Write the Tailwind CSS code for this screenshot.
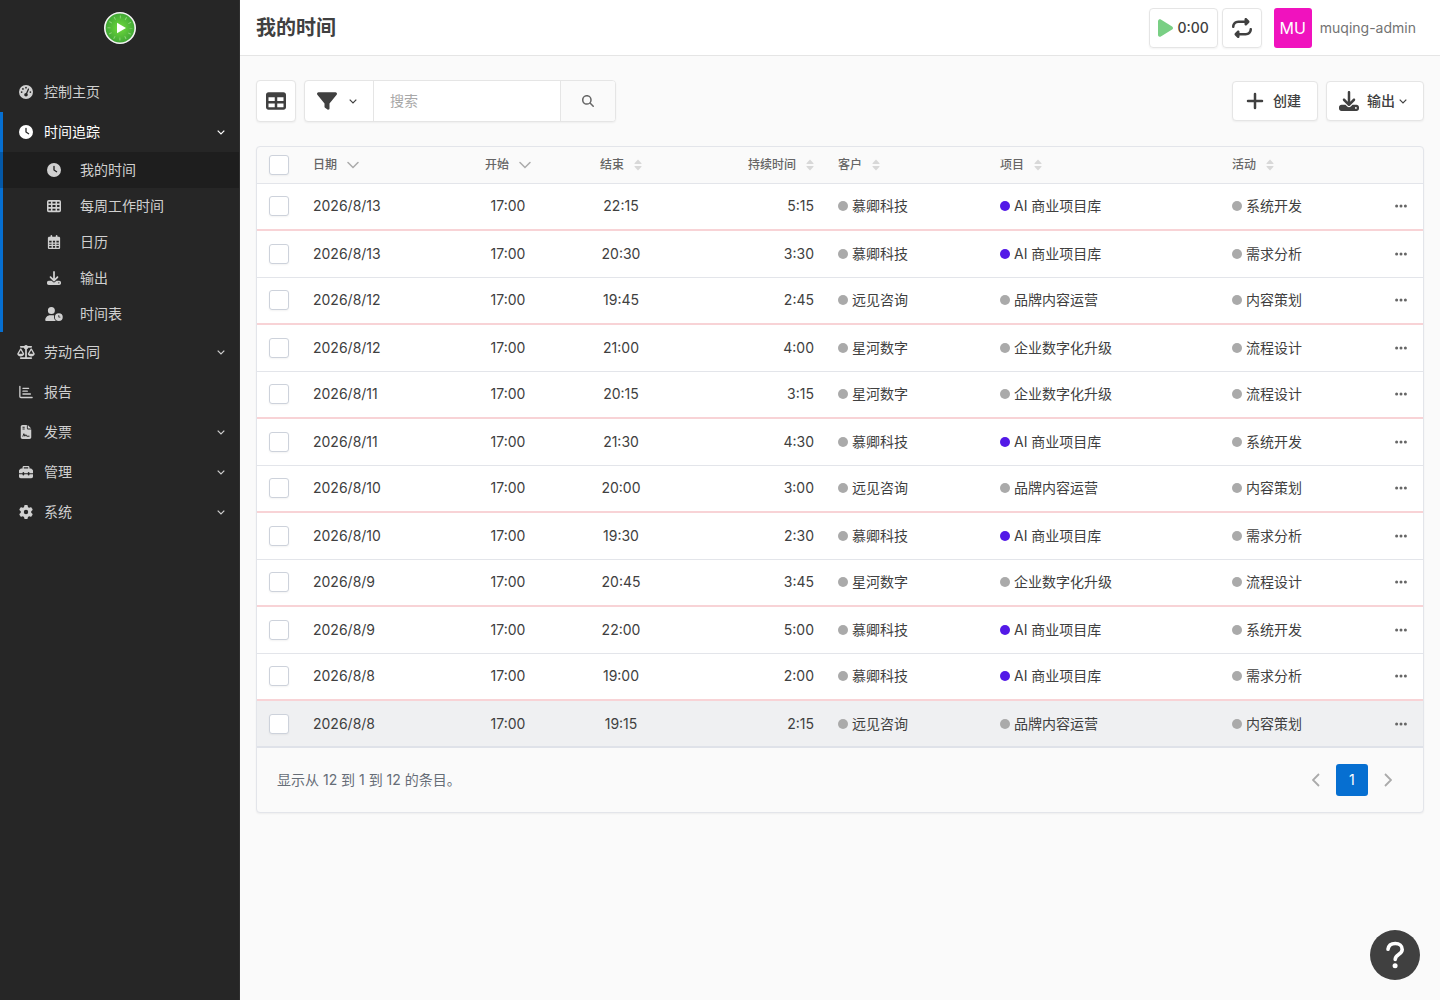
<!DOCTYPE html>
<html lang="zh-CN">
<head>
<meta charset="utf-8">
<meta name="viewport" content="width=device-width, initial-scale=1">
<title>我的时间</title>
<script src="https://cdn.jsdelivr.net/npm/@tailwindcss/browser@4"></script>
</head>
<body class="flex min-h-screen bg-[#fafafa] font-['Inter','Noto_Sans_CJK_SC',sans-serif] text-sm text-[#404040]">

<svg class="hidden" aria-hidden="true">
  <symbol id="clock" viewBox="0 0 512 512"><path d="M256 0a256 256 0 1 1 0 512A256 256 0 1 1 256 0zM232 120V256c0 8 4 15.500 10.700 20l96 64c11 7.400 25.900 4.400 33.300-6.700s4.400-25.900-6.700-33.300L280 243.200V120c0-13.300-10.700-24-24-24s-24 10.700-24 24z"/></symbol>
  <symbol id="gauge" viewBox="0 0 512 512"><path d="M0 256a256 256 0 1 1 512 0A256 256 0 1 1 0 256zM288 96a32 32 0 1 0 -64 0 32 32 0 1 0 64 0zM256 416c35.300 0 64-28.700 64-64c0-17.400-6.900-33.100-18.100-44.600L366 161.700c5.300-12.100-.2-26.300-12.300-31.600s-26.300 .2-31.600 12.300L257.900 288c-.6 0-1.300 0-1.900 0c-35.300 0-64 28.700-64 64s28.700 64 64 64zM176 144a32 32 0 1 0 -64 0 32 32 0 1 0 64 0zM96 288a32 32 0 1 0 0-64 32 32 0 1 0 0 64zm352-32a32 32 0 1 0 -64 0 32 32 0 1 0 64 0z"/></symbol>
  <symbol id="grid" viewBox="0 0 512 512"><path fill-rule="evenodd" d="M64 32H448a64 64 0 0 1 64 64V416a64 64 0 0 1-64 64H64a64 64 0 0 1-64-64V96A64 64 0 0 1 64 32zM56 96v64h88V96zM200 96v64h112V96zM368 96v64h88V96zM56 216v80h88v-80zM200 216v80h112v-80zM368 216v80h88v-80zM56 352v64h88v-64zM200 352v64h112v-64zM368 352v64h88v-64z"/></symbol>
  <symbol id="calendar" viewBox="0 0 448 512"><path fill-rule="evenodd" d="M128 0c17.700 0 32 14.300 32 32V64H288V32c0-17.700 14.300-32 32-32s32 14.300 32 32V64h48c26.500 0 48 21.500 48 48v48H0V112C0 85.500 21.500 64 48 64H96V32c0-17.700 14.300-32 32-32zM0 160H448V464c0 26.500-21.500 48-48 48H48c-26.500 0-48-21.500-48-48V160zM48 208v64h88v-64zM184 208v64h80v-64zM312 208v64h88v-64zM48 316v44h88v-44zM184 316v44h80v-44zM312 316v44h88v-44zM48 404v60h88v-60zM184 404v60h80v-60zM312 404v60h88v-60z"/></symbol>
  <symbol id="download" viewBox="0 0 512 512"><path d="M288 32c0-17.700-14.300-32-32-32s-32 14.300-32 32V274.700l-73.400-73.400c-12.500-12.500-32.800-12.500-45.300 0s-12.500 32.800 0 45.300l128 128c12.500 12.500 32.800 12.500 45.300 0l128-128c12.500-12.500 12.500-32.800 0-45.300s-32.800-12.500-45.300 0L288 274.700V32zM64 352c-35.300 0-64 28.700-64 64v32c0 35.300 28.700 64 64 64H448c35.300 0 64-28.700 64-64V416c0-35.300-28.700-64-64-64H346.500l-45.300 45.300c-25 25-65.500 25-90.500 0L165.500 352H64zm368 56a24 24 0 1 1 0 48 24 24 0 1 1 0-48z"/></symbol>
  <symbol id="user-clock" viewBox="0 0 640 512"><path d="M224 0a128 128 0 1 1 0 256A128 128 0 1 1 224 0zM178.300 304h91.400c20.600 0 40.400 3.500 58.800 9.900C323 331 320 349.100 320 368c0 59.500 29.500 112.100 74.800 144H29.700C13.300 512 0 498.700 0 482.300C0 383.800 79.800 304 178.300 304zM352 368a144 144 0 1 1 288 0 144 144 0 1 1 -288 0zm144-80c-8.800 0-16 7.200-16 16v64c0 8.800 7.200 16 16 16h48c8.800 0 16-7.200 16-16s-7.200-16-16-16H512V304c0-8.800-7.200-16-16-16z"/></symbol>
  <symbol id="scale" viewBox="0 0 640 512"><path fill-rule="evenodd" d="M384 32H512c17.700 0 32 14.300 32 32s-14.300 32-32 32H398c-5 25-22 46-46 56V448H512c17.700 0 32 14.300 32 32s-14.300 32-32 32H128c-17.700 0-32-14.300-32-32s14.300-32 32-32H288V152c-24-10-41-31-46-56H128c-17.700 0-32-14.300-32-32s14.300-32 32-32H256c15-19 38-32 64-32s49 13 64 32zM439 320H585L512 195zM512 416c-63 0-115-34-126-79-3-11 1-22 7-32l96-165c5-9 14-14 23-14s18 5 23 14l96 165c6 10 10 21 7 32-11 45-63 79-126 79zM127 195L54 320H200zM1 337c-3-11 1-22 7-32l96-165c5-9 14-14 23-14s18 5 23 14l96 165c6 10 10 21 7 32-11 45-63 79-126 79S12 382 1 337z"/></symbol>
  <symbol id="chart" viewBox="0 0 16 16"><path fill="none" stroke="currentColor" stroke-width="1.500" stroke-linecap="round" stroke-linejoin="round" d="M1 1.500v11.500a1.300 1.300 0 0 0 1.300 1.300H15M4.500 3.800h6.500M4.500 7h5M4.500 10.300h8.500"/></symbol>
  <symbol id="invoice" viewBox="0 0 384 512"><path fill-rule="evenodd" d="M64 0C28.700 0 0 28.700 0 64V448c0 35.300 28.700 64 64 64H320c35.300 0 64-28.700 64-64V160H256c-17.700 0-32-14.300-32-32V0zM256 0V128H384zM64 64h80v34H64zM64 128h80v34H64z"/><path d="M80 410l34-92 36 92 36-56 32 56h86" fill="none" stroke="#262626" stroke-width="36" stroke-linecap="round" stroke-linejoin="round"/></symbol>
  <symbol id="toolbox" viewBox="0 0 512 512"><path fill-rule="evenodd" d="M176 32H336c26.500 0 48 21.500 48 48v48h44c13 0 25 5 34 14l36 36c9 9 14 21 14 34v92H384v-16c0-17.700-14.300-32-32-32s-32 14.300-32 32v16H192v-16c0-17.700-14.300-32-32-32s-32 14.300-32 32v16H0v-92c0-13 5-25 14-34l36-36c9-9 21-14 34-14h44V80c0-26.500 21.500-48 48-48zM176 80v48H336V80zM0 336H128v16c0 17.700 14.300 32 32 32s32-14.300 32-32v-16H320v16c0 17.700 14.300 32 32 32s32-14.300 32-32v-16H512v80c0 35.300-28.700 64-64 64H64c-35.300 0-64-28.700-64-64z"/></symbol>
  <symbol id="gear" viewBox="0 0 512 512"><path d="M495.900 166.600c3.200 8.700 .5 18.400-6.400 24.600l-43.300 39.400c1.100 8.300 1.700 16.800 1.700 25.400s-.6 17.100-1.700 25.400l43.300 39.400c6.900 6.200 9.600 15.900 6.400 24.600c-4.400 11.900-9.700 23.300-15.800 34.300l-4.700 8.100c-6.600 11-14 21.400-22.100 31.200c-5.900 7.200-15.700 9.600-24.500 6.800l-55.700-17.700c-13.400 10.300-28.200 18.900-44 25.400l-12.500 57.100c-2 9.100-9 16.300-18.200 17.800c-13.800 2.300-28 3.500-42.500 3.500s-28.700-1.200-42.500-3.500c-9.200-1.500-16.200-8.700-18.200-17.800l-12.500-57.100c-15.800-6.500-30.600-15.100-44-25.400L83.100 425.900c-8.800 2.800-18.600 .3-24.500-6.800c-8.100-9.800-15.500-20.200-22.100-31.200l-4.700-8.100c-6.100-11-11.400-22.400-15.800-34.300c-3.200-8.700-.5-18.400 6.400-24.600l43.300-39.400C64.600 273.100 64 264.600 64 256s.6-17.100 1.700-25.400L22.400 191.200c-6.900-6.200-9.600-15.900-6.400-24.600c4.400-11.900 9.700-23.300 15.800-34.300l4.700-8.100c6.600-11 14-21.400 22.100-31.200c5.900-7.200 15.700-9.600 24.500-6.800l55.700 17.700c13.400-10.300 28.200-18.900 44-25.400l12.500-57.100c2-9.100 9-16.300 18.200-17.800C227.300 1.200 241.500 0 256 0s28.700 1.200 42.500 3.500c9.200 1.500 16.200 8.700 18.200 17.800l12.500 57.100c15.800 6.500 30.600 15.100 44 25.400l55.700-17.700c8.800-2.800 18.600-.3 24.500 6.800c8.100 9.800 15.500 20.200 22.100 31.200l4.700 8.100c6.100 11 11.400 22.400 15.800 34.300zM256 336a80 80 0 1 0 0-160 80 80 0 1 0 0 160z"/></symbol>
  <symbol id="table" viewBox="0 0 512 512"><path d="M64 256V160H224v96H64zm0 64H224v96H64V320zm224 96V320H448v96H288zM448 256H288V160H448v96zM64 32C28.700 32 0 60.700 0 96V416c0 35.300 28.700 64 64 64H448c35.300 0 64-28.700 64-64V96c0-35.300-28.700-64-64-64H64z"/></symbol>
  <symbol id="filter" viewBox="0 0 512 512"><path d="M3.900 54.900C10.500 40.900 24.500 32 40 32H472c15.500 0 29.500 8.900 36.100 22.900s4.600 30.500-5.200 42.500L320 320.900V448c0 12.100-6.800 23.200-17.700 28.600s-23.800 4.300-33.500-3l-64-48c-8.100-6-12.800-15.500-12.800-25.600V320.900L9 97.300C-.7 85.400-2.800 68.800 3.900 54.900z"/></symbol>
  <symbol id="search" viewBox="0 0 512 512"><path d="M416 208c0 45.900-14.900 88.300-40 122.700L502.600 457.400c12.500 12.500 12.500 32.800 0 45.300s-32.800 12.500-45.300 0L330.700 376c-34.400 25.200-76.800 40-122.700 40C93.100 416 0 322.900 0 208S93.100 0 208 0S416 93.100 416 208zM208 352a144 144 0 1 0 0-288 144 144 0 1 0 0 288z"/></symbol>
  <symbol id="play" viewBox="0 0 384 512"><path d="M73 39c-14.800-9.100-33.400-9.400-48.500-.9S0 62.600 0 80V432c0 17.400 9.400 33.400 24.500 41.900s33.700 8.100 48.500-.9L361 297c14.300-8.700 23-24.200 23-41s-8.700-32.200-23-41L73 39z"/></symbol>
  <symbol id="repeat" viewBox="0 0 512 512"><path d="M0 224c0 17.700 14.300 32 32 32s32-14.300 32-32c0-53 43-96 96-96H320v32c0 12.900 7.800 24.600 19.800 29.600s25.700 2.200 34.900-6.900l64-64c12.500-12.500 12.500-32.800 0-45.300l-64-64c-9.200-9.200-22.900-11.900-34.900-6.900S320 19.100 320 32V64H160C71.600 64 0 135.600 0 224zm512 64c0-17.700-14.300-32-32-32s-32 14.300-32 32c0 53-43 96-96 96H192V352c0-12.900-7.800-24.600-19.800-29.600s-25.700-2.200-34.900 6.900l-64 64c-12.500 12.500-12.500 32.800 0 45.300l64 64c9.200 9.200 22.900 11.900 34.900 6.900s19.800-16.600 19.800-29.600V448H352c88.400 0 160-71.600 160-160z"/></symbol>
  <symbol id="plus" viewBox="0 0 20 20"><path fill="none" stroke="currentColor" stroke-width="2.500" stroke-linecap="round" d="M10 3v14M3 10h14"/></symbol>
  <symbol id="caret" viewBox="0 0 8 8"><path fill="none" stroke="currentColor" stroke-width="1.200" d="M.7 2.700 4 6 7.300 2.700"/></symbol>
  <symbol id="desc" viewBox="0 0 12 8"><path fill="none" stroke="currentColor" stroke-width="1.500" stroke-linecap="round" d="M1 1.500 6 6.500 11 1.500"/></symbol>
  <symbol id="sort" viewBox="0 0 8 12"><path d="M4 .5 7.500 4.200q.4.800-.5.800H1Q.1 5 .5 4.200zM4 11.500 7.500 7.800q.4-.8-.5-.8H1q-.9 0-.5.800z"/></symbol>
  <symbol id="dots" viewBox="0 0 12 4"><circle cx="1.600" cy="2" r="1.500"/><circle cx="6" cy="2" r="1.500"/><circle cx="10.400" cy="2" r="1.500"/></symbol>
</svg>

<aside class="w-60 shrink-0 border-r border-[#303030] bg-[#262626] text-[#d0d0d0]">
  <a href="#" aria-label="首页" class="flex h-14 items-center justify-center">
    <svg class="size-8" viewBox="0 0 32 32">
      <defs><radialGradient id="face"><stop offset="0" stop-color="#6fdc3c"/><stop offset="1" stop-color="#3fa535"/></radialGradient></defs>
      <circle cx="16" cy="16" r="15.200" fill="url(#face)" stroke="#f4f4f4" stroke-width="1.600"/>
      <circle cx="16" cy="16" r="11" fill="none" stroke="#b5eaa0" stroke-opacity=".6" stroke-width="3" stroke-dasharray="1 4.760" stroke-dashoffset=".5"/>
      <path d="M13 10.700v10.600L22 16z" fill="#fff"/>
    </svg>
  </a>
  <nav class="pt-4">
    <a href="#" class="flex h-10 items-center gap-2 px-4"><svg class="h-3.5 w-5 fill-current"><use href="#gauge"/></svg>控制主页</a>
    <div class="border-l-[3px] border-[#066fd1]">
      <a href="#" class="-ml-[3px] flex h-10 items-center gap-2 pr-3.5 pl-4 text-white"><svg class="h-3.5 w-5 fill-current"><use href="#clock"/></svg><span class="grow">时间追踪</span><svg class="size-2"><use href="#caret"/></svg></a>
      <a href="#" aria-current="page" class="-ml-[3px] flex h-9 items-center gap-4 bg-black/20 pl-11"><svg class="h-3.5 w-5 fill-current"><use href="#clock"/></svg>我的时间</a>
      <a href="#" class="-ml-[3px] flex h-9 items-center gap-4 pl-11"><svg class="h-3.5 w-5 fill-current"><use href="#grid"/></svg>每周工作时间</a>
      <a href="#" class="-ml-[3px] flex h-9 items-center gap-4 pl-11"><svg class="h-3.5 w-5 fill-current"><use href="#calendar"/></svg>日历</a>
      <a href="#" class="-ml-[3px] flex h-9 items-center gap-4 pl-11"><svg class="h-3.5 w-5 fill-current"><use href="#download"/></svg>输出</a>
      <a href="#" class="-ml-[3px] flex h-9 items-center gap-4 pl-11"><svg class="h-3.5 w-5 fill-current"><use href="#user-clock"/></svg>时间表</a>
    </div>
    <a href="#" class="flex h-10 items-center gap-2 pr-3.5 pl-4"><svg class="h-3.5 w-5 fill-current"><use href="#scale"/></svg><span class="grow">劳动合同</span><svg class="size-2"><use href="#caret"/></svg></a>
    <a href="#" class="flex h-10 items-center gap-2 px-4"><svg class="h-3.5 w-5 fill-current"><use href="#chart"/></svg>报告</a>
    <a href="#" class="flex h-10 items-center gap-2 pr-3.5 pl-4"><svg class="h-3.5 w-5 fill-current"><use href="#invoice"/></svg><span class="grow">发票</span><svg class="size-2"><use href="#caret"/></svg></a>
    <a href="#" class="flex h-10 items-center gap-2 pr-3.5 pl-4"><svg class="h-3.5 w-5 fill-current"><use href="#toolbox"/></svg><span class="grow">管理</span><svg class="size-2"><use href="#caret"/></svg></a>
    <a href="#" class="flex h-10 items-center gap-2 pr-3.5 pl-4"><svg class="h-3.5 w-5 fill-current"><use href="#gear"/></svg><span class="grow">系统</span><svg class="size-2"><use href="#caret"/></svg></a>
  </nav>
</aside>

<div class="min-w-0 grow">
  <header class="flex h-14 items-center border-b border-[#e5e5e5] bg-white pr-6 pl-4">
    <h1 class="grow text-xl font-semibold">我的时间</h1>
    <button class="flex h-10 items-center gap-1 rounded border border-[#e5e5e5] px-2 font-medium shadow-xs"><svg class="h-5 w-[15px] fill-[#79cf84]"><use href="#play"/></svg>0:00</button>
    <button aria-label="重新开始" class="ml-1 flex size-10 items-center justify-center rounded border border-[#e5e5e5] shadow-xs"><svg class="size-5 fill-current"><use href="#repeat"/></svg></button>
    <a href="#" class="ml-3 flex items-center gap-2 text-[#737373]"><span class="flex h-10 w-[38px] items-center justify-center rounded-[3px] bg-[#f012be] text-base text-white">MU</span>muqing-admin</a>
  </header>

  <main class="px-4 pt-6">
    <div class="flex items-center">
      <button aria-label="列" class="mr-2 flex h-[42px] w-10 items-center justify-center rounded border border-[#e5e5e5] bg-white shadow-xs"><svg class="size-5 fill-current"><use href="#table"/></svg></button>
      <form class="flex h-[42px] w-[312px] overflow-hidden rounded border border-[#e5e5e5] bg-white shadow-xs">
        <button type="button" aria-label="筛选" class="flex w-[69px] shrink-0 items-center gap-3 border-r border-[#e5e5e5] pl-3"><svg class="size-5 fill-current"><use href="#filter"/></svg><svg class="size-2"><use href="#caret"/></svg></button>
        <input type="search" aria-label="搜索" placeholder="搜索" class="min-w-0 grow px-4 outline-none placeholder:text-[#a8a8a8]">
        <button aria-label="开始搜索" class="flex w-[55px] shrink-0 items-center justify-center border-l border-[#e5e5e5] bg-[#fafafa]"><svg class="size-3 fill-[#666]"><use href="#search"/></svg></button>
      </form>
      <button class="ml-auto flex h-10 items-center gap-2 rounded border border-[#e5e5e5] bg-white px-3 pr-4 font-medium shadow-xs"><svg class="size-5"><use href="#plus"/></svg>创建</button>
      <button class="ml-2 flex h-10 items-center gap-2 rounded border border-[#e5e5e5] bg-white pr-4 pl-3 font-medium shadow-xs"><svg class="size-5 fill-current"><use href="#download"/></svg><span class="flex items-center gap-1">输出<svg class="size-2"><use href="#caret"/></svg></span></button>
    </div>

    <section class="mt-6 overflow-hidden rounded border border-[#e3e5ea] bg-[#fafafa] shadow-xs">
      <table class="w-full table-fixed">
        <colgroup><col class="w-[44px]"><col class="w-[172px]"><col class="w-[70px]"><col class="w-[156px]"><col class="w-[127px]"><col class="w-[162px]"><col class="w-[232px]"><col class="w-[169px]"><col class="w-[34px]"></colgroup>
        <thead>
          <tr class="h-9 border-b border-[#e3e5ea] text-left text-xs whitespace-nowrap text-[#666]">
            <th class="pl-3"><input type="checkbox" aria-label="全选" class="block size-5 appearance-none rounded-[3px] border border-[#cdd2db] bg-white shadow-xs"></th>
            <th class="px-3 font-medium"><span class="flex items-center gap-2.5">日期<svg class="h-2 w-3 text-[#aaa]"><use href="#desc"/></svg></span></th>
            <th class="px-3 font-medium"><span class="flex items-center gap-2.5">开始<svg class="h-2 w-3 text-[#aaa]"><use href="#desc"/></svg></span></th>
            <th class="px-3 font-medium"><span class="flex items-center justify-center gap-2.5">结束<svg class="h-3 w-2 fill-[#d8d8d8]"><use href="#sort"/></svg></span></th>
            <th class="px-3 font-medium"><span class="flex items-center justify-end gap-2.5">持续时间<svg class="h-3 w-2 fill-[#d8d8d8]"><use href="#sort"/></svg></span></th>
            <th class="px-3 font-medium"><span class="flex items-center gap-2.5">客户<svg class="h-3 w-2 fill-[#d8d8d8]"><use href="#sort"/></svg></span></th>
            <th class="px-3 font-medium"><span class="flex items-center gap-2.5">项目<svg class="h-3 w-2 fill-[#d8d8d8]"><use href="#sort"/></svg></span></th>
            <th class="px-3 font-medium"><span class="flex items-center gap-2.5">活动<svg class="h-3 w-2 fill-[#d8d8d8]"><use href="#sort"/></svg></span></th>
            <th></th>
          </tr>
        </thead>
        <tbody id="entries"></tbody>
      </table>
      <footer class="flex h-16 items-center justify-between pr-[19px] pl-5 text-[#666d77]">
        <p>显示从 12 到 1 到 12 的条目。</p>
        <nav aria-label="分页" class="flex items-center">
          <a href="#" aria-label="上一页" class="flex size-8 items-center justify-center text-[#aaa]"><svg class="h-3.5 w-2" viewBox="0 0 8 14"><path d="M7 1 1 7l6 6" fill="none" stroke="currentColor" stroke-width="1.800"/></svg></a>
          <a href="#" aria-current="page" class="mx-1 flex size-8 items-center justify-center rounded-[3px] bg-[#066fd1] text-white">1</a>
          <a href="#" aria-label="下一页" class="flex size-8 items-center justify-center text-[#aaa]"><svg class="h-3.5 w-2" viewBox="0 0 8 14"><path d="m1 1 6 6-6 6" fill="none" stroke="currentColor" stroke-width="1.800"/></svg></a>
        </nav>
      </footer>
    </section>
  </main>
</div>

<button aria-label="帮助" class="fixed right-5 bottom-5 flex size-[50px] items-center justify-center rounded-full bg-[#404040]">
  <svg class="h-7 w-5" viewBox="0 0 20 28"><path d="M3 8.300C3.500 4.500 6.500 2.500 10.300 2.500c4 0 6.900 2.300 6.900 6 0 5.500-7 4.700-7 10" fill="none" stroke="#fff" stroke-width="3.600" stroke-linecap="round"/><circle cx="10.100" cy="24.700" r="2.500" fill="#fff"/></svg>
</button>

<script>
  const entries = [
    ['2026/8/13', '22:15', '5:15', '慕卿科技', 'AI 商业项目库', '系统开发'],
    ['2026/8/13', '20:30', '3:30', '慕卿科技', 'AI 商业项目库', '需求分析'],
    ['2026/8/12', '19:45', '2:45', '远见咨询', '品牌内容运营', '内容策划'],
    ['2026/8/12', '21:00', '4:00', '星河数字', '企业数字化升级', '流程设计'],
    ['2026/8/11', '20:15', '3:15', '星河数字', '企业数字化升级', '流程设计'],
    ['2026/8/11', '21:30', '4:30', '慕卿科技', 'AI 商业项目库', '系统开发'],
    ['2026/8/10', '20:00', '3:00', '远见咨询', '品牌内容运营', '内容策划'],
    ['2026/8/10', '19:30', '2:30', '慕卿科技', 'AI 商业项目库', '需求分析'],
    ['2026/8/9', '20:45', '3:45', '星河数字', '企业数字化升级', '流程设计'],
    ['2026/8/9', '22:00', '5:00', '慕卿科技', 'AI 商业项目库', '系统开发'],
    ['2026/8/8', '19:00', '2:00', '慕卿科技', 'AI 商业项目库', '需求分析'],
    ['2026/8/8', '19:15', '2:15', '远见咨询', '品牌内容运营', '内容策划'],
  ];
  // Each pair of entries is closed by a red line after the first and a grey one after the second.
  const rowClass = i =>
    i === 11 ? 'h-[47px] border-b-2 border-[#dfe2e9] bg-[#eff0f2]'
    : i % 2 === 0 ? 'h-[47px] border-b-2 border-[#f8d3d6] bg-white'
    : 'h-[47px] border-b border-[#e3e5ea] bg-white';
  const label = (text, dot) =>
    `<td class="px-3"><span class="flex items-center gap-1"><i class="size-2.5 rounded-full ${dot}"></i>${text}</span></td>`;
  document.getElementById('entries').innerHTML = entries.map(([date, end, duration, customer, project, activity], i) => `
    <tr class="${rowClass(i)} whitespace-nowrap">
      <td class="pl-3"><input type="checkbox" aria-label="选择 ${date} ${end}" class="block size-5 appearance-none rounded-[3px] border border-[#cdd2db] bg-white shadow-xs"></td>
      <td class="px-3">${date}</td>
      <td class="px-3 text-center">17:00</td>
      <td class="px-3 text-center">${end}</td>
      <td class="px-3 text-right">${duration}</td>
      ${label(customer, 'bg-[#aaaaaa]')}
      ${label(project, project.startsWith('AI') ? 'bg-[#5319e7]' : 'bg-[#aaaaaa]')}
      ${label(activity, 'bg-[#aaaaaa]')}
      <td><button aria-label="操作" class="ml-1.5 flex h-5 w-3 items-center"><svg class="h-1 w-3 fill-[#666]"><use href="#dots"/></svg></button></td>
    </tr>`).join('');
</script>
</body>
</html>
